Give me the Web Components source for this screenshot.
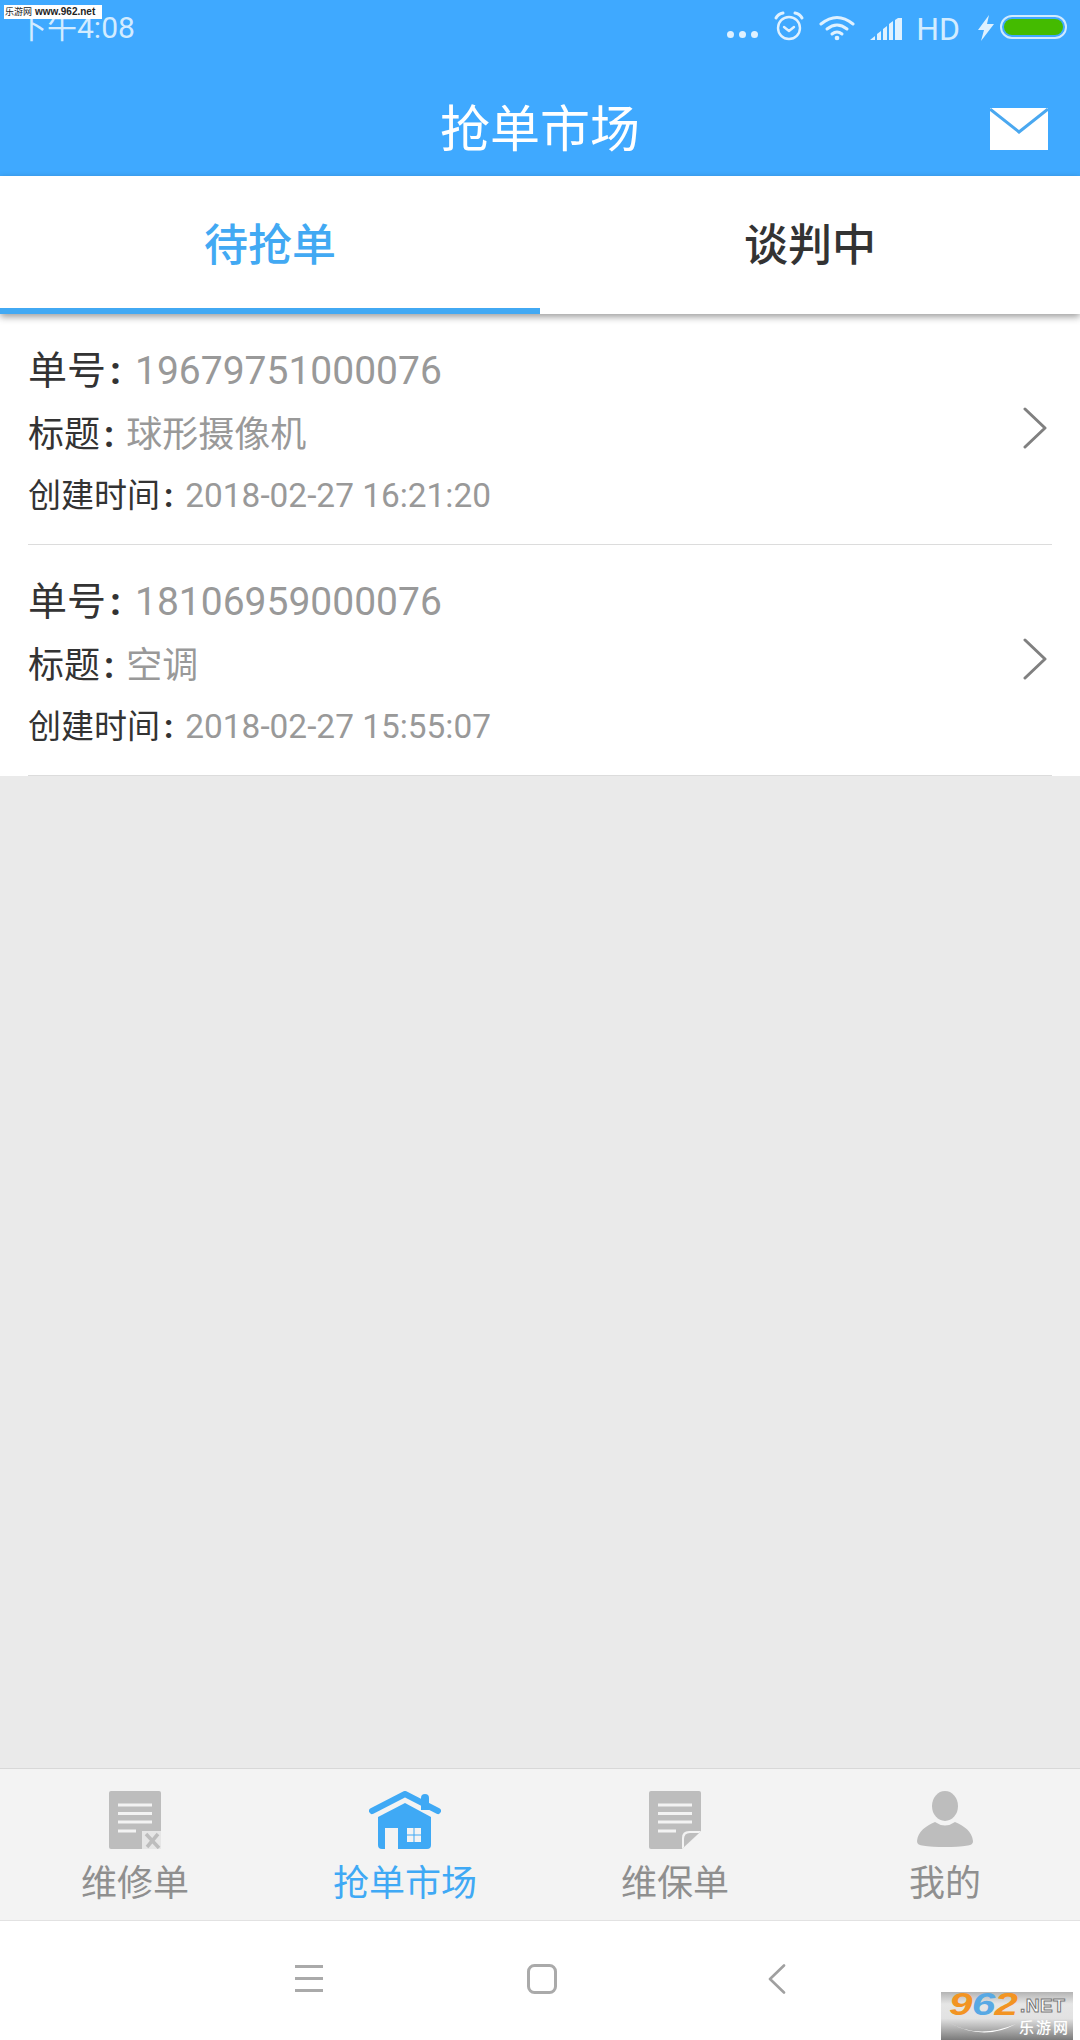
<!DOCTYPE html>
<html lang="zh">
<head>
<meta charset="utf-8">
<title>抢单市场</title>
<style>
html, body { margin: 0; padding: 0; }
body { width: 1080px; height: 2040px; overflow: hidden; font-family: Roboto, "Noto Sans CJK SC", sans-serif; }
</style>
</head>
<body>
<market-app></market-app>
<script>
const FONT = `Roboto, "Noto Sans CJK SC", sans-serif`;

class StatusBar extends HTMLElement {
    constructor() {
        super();
        this.attachShadow({mode:"open"}).innerHTML = `
<style>
:host { display: flex; align-items: flex-start; height: 56px; color: #d3ecff; position: relative; }
.time { font: 30px/34px ${FONT}; margin: 11px 0 0 17px; flex: 1; }
.right { display: flex; align-items: flex-start; }
.dots { display: flex; gap: 5px; margin: 31px 0 0 0; }
.dots i { width: 7px; height: 7px; border-radius: 50%; background: #dff1ff; }
svg { display: block; }
.hd { font: 400 32px/30px ${FONT}; margin: 14px 0 0 11px; }
.batt { width: 67px; height: 24px; box-sizing: border-box; border: 2px solid #cfeaff; border-radius: 12px; padding: 2px; margin: 15px 13px 0 6px; }
.batt i { display: block; height: 100%; background: #44bb00; border-radius: 8px; }
.mark { position: absolute; left: 4px; top: 5px; width: 98px; height: 14px; background: #fff; color: #222; display: flex; align-items: center; gap: 3px; padding-left: 1px; box-sizing: border-box; white-space: nowrap; }
.mark b { font: 400 9px/14px "Noto Sans CJK SC", sans-serif; }
.mark span { font: 700 10px/14px "Liberation Sans", sans-serif; }
</style>
<div class="time">下午4:08</div>
<div class="right">
  <div class="dots"><i></i><i></i><i></i></div>
  <svg width="32" height="32" viewBox="0 0 32 32" style="margin:10px 0 0 15px" fill="none" stroke="#dff1ff" stroke-width="2.4" stroke-linecap="round" stroke-linejoin="round">
    <circle cx="16" cy="18" r="11"/><path d="M11 17l5 4 5-4"/><path d="M3 8q2-4 7-5M29 8q-2-4-7-5" stroke-width="3"/>
  </svg>
  <svg width="36" height="26" viewBox="0 0 36 26" style="margin:15px 0 0 14px" fill="none" stroke="#dff1ff" stroke-width="3" stroke-linecap="round">
    <path d="M2 9q16-13 32 0"/><path d="M8 14q10-8 20 0"/><path d="M13 19q5-4 10 0"/><circle cx="18" cy="23" r="1.6" fill="#dff1ff" stroke-width="1.5"/>
  </svg>
  <svg width="35" height="25" viewBox="0 0 35 25" style="margin:16px 0 0 15px" fill="#dff1ff">
    <path d="M0 24l5-4v4zM7 18l4-3v9H7zM13 13l4-3v14h-4zM19 8l4-3v19h-4zM25 4l3-2h4v22h-7z"/>
  </svg>
  <div class="hd">HD</div>
  <svg width="16" height="26" viewBox="0 0 16 26" style="margin:15px 0 0 18px" fill="#dff1ff">
    <path d="M11 0L0 15h6l-3 11L16 9H9z"/>
  </svg>
  <div class="batt"><i></i></div>
</div>
<div class="mark"><b>乐游网</b><span>www.962.net</span></div>
`;
    }
}

class TitleBar extends HTMLElement {
    constructor() {
        super();
        this.attachShadow({mode:"open"}).innerHTML = `
<style>
:host { display: flex; align-items: center; justify-content: center; height: 120px; position: relative; color: #fff; font: 50px/60px ${FONT}; padding-top: 28px; box-sizing: border-box; }
svg { position: absolute; left: 990px; top: 52px; }
</style>
<slot></slot>
<svg width="58" height="42" viewBox="0 0 58 42">
  <rect width="58" height="42" fill="#fff"/>
  <path d="M0 1l29 23L58 1" fill="none" stroke="#4aa8f0" stroke-width="3"/>
</svg>
`;
    }
}

class TabStrip extends HTMLElement {
    constructor() {
        super();
        this.attachShadow({mode:"open"}).innerHTML = `
<style>
:host { display: flex; height: 138px; background: #fff; position: relative; z-index: 2; box-shadow: 0 3px 7px rgba(0,0,0,.38); }
div { flex: 1; display: flex; align-items: center; justify-content: center; font: 500 44px/60px ${FONT}; color: #333; border-bottom: 6px solid transparent; box-sizing: border-box; padding-top: 8px; }
.on { color: #42a9f3; border-bottom-color: #42a9f3; }
</style>
<div class="on">待抢单</div>
<div>谈判中</div>
`;
    }
}

class OrderRow extends HTMLElement {
    constructor() {
        super();
        this.attachShadow({mode:"open"}).innerHTML = `
<style>
:host { display: block; background: #fff; padding: 0 28px; }
.box { display: flex; align-items: center; border-bottom: 1px solid #dcdcdc; height: 231px; box-sizing: border-box; padding: 0 5px 0 0; }
.text { flex: 1; color: #333; padding-top: 7px; }
.text div { white-space: nowrap; }
.a { font: 39px/62px ${FONT}; margin-top: -1px; }
.b { font: 36px/66px ${FONT}; }
.c { font: 33px/56px ${FONT}; }
.c .v { font-size: 33.4px; }
.dot { font-weight: 700; margin: 0 12px 0 4px; }
.a .dot { margin-right: 14px; }
.v { color: #999; }
svg { display: block; margin-top: -2px; }
</style>
<div class="box">
<div class="text">
  <div class="a">单号<span class="dot">:</span><span class="v" id="no"></span></div>
  <div class="b">标题<span class="dot">:</span><span class="v" id="title"></span></div>
  <div class="c">创建时间<span class="dot">:</span><span class="v" id="time"></span></div>
</div>
<svg width="24" height="42" viewBox="0 0 24 42" fill="none" stroke="#808080" stroke-width="3" stroke-linecap="round" stroke-linejoin="round"><path d="M2 2l20 19L2 40"/></svg>
</div>
`;
    }
    connectedCallback() {
        const s = this.shadowRoot;
        s.getElementById("no").textContent = this.getAttribute("no");
        s.getElementById("title").textContent = this.getAttribute("label");
        s.getElementById("time").textContent = this.getAttribute("time");
    }
}

const GREY = "#bdbdbd";
const TAB_ICONS = {
    repair: `<svg width="52" height="58" viewBox="0 0 52 58">
  <path d="M2 0h48a2 2 0 0 1 2 2v38H33v18H2a2 2 0 0 1-2-2V2a2 2 0 0 1 2-2z" fill="${GREY}"/>
  <path d="M33 40h19v18H33z" fill="#e6e6e6"/>
  <path d="M9 14h34M9 22.500h34M9 31h34M9 40h18" stroke="#f3f3f3" stroke-width="3"/>
  <path d="M37 43l13 14M49 43L38 56" stroke="${GREY}" stroke-width="3.500"/>
</svg>`,
    home: `<svg width="72" height="58" viewBox="0 0 72 58">
  <path d="M9 26L36 12l26 14v28a4 4 0 0 1-4 4H13a4 4 0 0 1-4-4z" fill="#3fa9f5"/>
  <path d="M52 7a4 4 0 0 1 8 0v12h-8z" fill="#3fa9f5"/>
  <path d="M3 20L36 3l33 17" fill="none" stroke="#3fa9f5" stroke-width="6" stroke-linecap="round" stroke-linejoin="round"/>
  <path d="M16 37h13v21H16z" fill="#f3f3f3"/>
  <path d="M38 37h6.500v6.500H38zM45.500 37H52v6.500h-6.500zM38 44.500h6.500V51H38zM45.500 44.500H52V51h-6.500z" fill="#f3f3f3"/>
</svg>`,
    doc: `<svg width="52" height="58" viewBox="0 0 52 58">
  <path d="M2 0h48a2 2 0 0 1 2 2v38L33 58H2a2 2 0 0 1-2-2V2a2 2 0 0 1 2-2z" fill="${GREY}"/>
  <path d="M9 14h34M9 22.500h34M9 31h34M9 40h18" stroke="#f3f3f3" stroke-width="3"/>
  <path d="M52 40H40q-7 0-7 7v11z" fill="#f3f3f3"/>
  <path d="M50 42H41q-6 0-6 6v8z" fill="${GREY}"/>
</svg>`,
    me: `<svg width="56" height="58" viewBox="0 0 56 58" fill="${GREY}">
  <ellipse cx="28" cy="15" rx="13" ry="15"/>
  <path d="M0 50C1 40 9 35 18 31q10 7 20 0c9 4 17 9 18 19 0 3-2 4-5 4.500-14 2-32 2-46 0-3-.5-5-1.500-5-4.500z"/>
</svg>`
};

class TabItem extends HTMLElement {
    constructor() {
        super();
        this.attachShadow({mode:"open"}).innerHTML = `
<style>
:host { display: flex; flex-direction: column; align-items: center; flex: 1; color: #8f8f8f; font: 36px/50px ${FONT}; padding-top: 22px; box-sizing: border-box; }
:host([active]) { color: #3fa9f5; }
#icon { height: 58px; }
svg { display: block; }
slot { display: block; margin-top: 10px; }
</style>
<div id="icon"></div>
<slot></slot>
`;
    }
    connectedCallback() {
        this.shadowRoot.getElementById("icon").innerHTML = TAB_ICONS[this.getAttribute("icon")];
    }
}

class TabBar extends HTMLElement {
    constructor() {
        super();
        this.attachShadow({mode:"open"}).innerHTML = `
<style>
:host { display: flex; height: 153px; box-sizing: border-box; background: #f3f3f3; border-top: 1px solid #d8d8d8; border-bottom: 1px solid #e2e2e2; }
</style>
<slot></slot>
`;
    }
}

class NavBar extends HTMLElement {
    constructor() {
        super();
        this.attachShadow({mode:"open"}).innerHTML = `
<style>
:host { display: flex; height: 119px; background: #fff; padding: 44px 0 0 295px; box-sizing: border-box; position: relative; }
svg { display: block; }
.mark { position: absolute; left: 941px; top: 71px; width: 132px; height: 48px; background: linear-gradient(#b4b4b4 0, #e6e6e6 25%, #e2e2e2 55%, #7a7a7a 100%); }
.num { position: absolute; left: 8px; top: -3px; font: italic 700 31px/32px "Liberation Sans", sans-serif; letter-spacing: -.5px; transform-origin: left top; transform: scaleX(1.36); white-space: nowrap; }
.num i { font-style: inherit; color: #f29423; }
.num i:nth-child(2) { color: #58a9e4; }
.net { position: absolute; left: 79px; top: 3px; font: 700 19px/22px "Liberation Sans", sans-serif; color: #fff; -webkit-text-stroke: 1px #777; letter-spacing: .5px; }
.cn { position: absolute; left: 78px; top: 24px; font: 500 15px/22px "Noto Sans CJK SC", sans-serif; color: #fff; letter-spacing: 2px; white-space: nowrap; }
.swoosh { position: absolute; left: 6px; top: 28px; }
</style>
<svg width="28" height="27" viewBox="0 0 28 27" fill="#aaa"><rect y="0" width="28" height="3"/><rect y="12" width="28" height="3"/><rect y="24" width="28" height="3"/></svg>
<svg width="30" height="30" viewBox="0 0 30 30" style="margin:-1px 0 0 204px" fill="none" stroke="#aaa" stroke-width="3"><rect x="1.500" y="1.500" width="27" height="27" rx="6"/></svg>
<svg width="18" height="30" viewBox="0 0 18 30" style="margin:-1px 0 0 211px" fill="none" stroke="#a0a0a0" stroke-width="2.600" stroke-linecap="round" stroke-linejoin="round"><path d="M16 1.500L2 15l14 13.500"/></svg>
<div class="mark">
  <div class="num"><i>9</i><i>6</i><i>2</i></div>
  <div class="net">.NET</div>
  <div class="cn">乐游网</div>
  <svg class="swoosh" width="70" height="16" viewBox="0 0 70 16"><path d="M1 2q30 18 68 2Q36 22 1 2z" fill="#fff"/></svg>
</div>
`;
    }
}

class MarketApp extends HTMLElement {
    constructor() {
        super();
        this.attachShadow({mode:"open"}).innerHTML = `
<style>
:host { display: flex; flex-direction: column; width: 1080px; height: 2040px; background: #eaeaea; font-family: ${FONT}; }
header { background: #3fa9ff; }
main { flex: 1; }
</style>
<header>
  <status-bar></status-bar>
  <title-bar>抢单市场</title-bar>
</header>
<tab-strip></tab-strip>
<main>
  <order-row no="19679751000076" label="球形摄像机" time="2018-02-27 16:21:20"></order-row>
  <order-row no="18106959000076" label="空调" time="2018-02-27 15:55:07"></order-row>
</main>
<tab-bar>
  <tab-item icon="repair">维修单</tab-item>
  <tab-item icon="home" active>抢单市场</tab-item>
  <tab-item icon="doc">维保单</tab-item>
  <tab-item icon="me">我的</tab-item>
</tab-bar>
<nav-bar></nav-bar>
`;
    }
}

customElements.define("status-bar", StatusBar);
customElements.define("title-bar", TitleBar);
customElements.define("tab-strip", TabStrip);
customElements.define("order-row", OrderRow);
customElements.define("tab-item", TabItem);
customElements.define("tab-bar", TabBar);
customElements.define("nav-bar", NavBar);
customElements.define("market-app", MarketApp);
</script>
</body>
</html>
